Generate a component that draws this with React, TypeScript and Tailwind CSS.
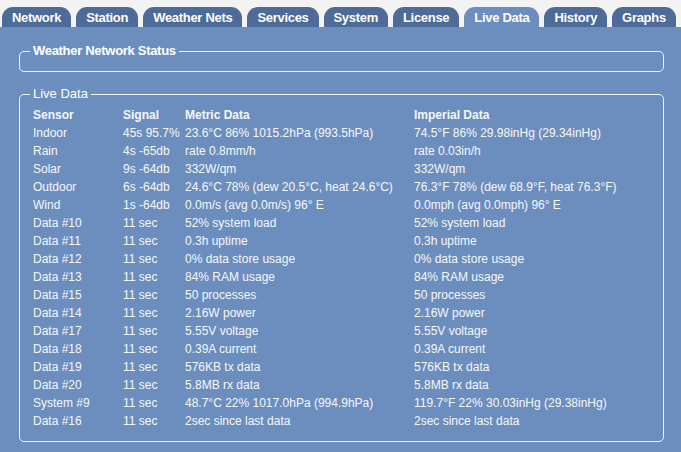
import React from 'react'

const tabs = ['Network', 'Station', 'Weather Nets', 'Services', 'System', 'License', 'Live Data', 'History', 'Graphs']

const rows: [string, string, string, string][] = [
  ['Indoor', '45s 95.7%', '23.6°C 86% 1015.2hPa (993.5hPa)', '74.5°F 86% 29.98inHg (29.34inHg)'],
  ['Rain', '4s -65db', 'rate 0.8mm/h', 'rate 0.03in/h'],
  ['Solar', '9s -64db', '332W/qm', '332W/qm'],
  ['Outdoor', '6s -64db', '24.6°C 78% (dew 20.5°C, heat 24.6°C)', '76.3°F 78% (dew 68.9°F, heat 76.3°F)'],
  ['Wind', '1s -64db', '0.0m/s (avg 0.0m/s) 96° E', '0.0mph (avg 0.0mph) 96° E'],
  ['Data #10', '11 sec', '52% system load', '52% system load'],
  ['Data #11', '11 sec', '0.3h uptime', '0.3h uptime'],
  ['Data #12', '11 sec', '0% data store usage', '0% data store usage'],
  ['Data #13', '11 sec', '84% RAM usage', '84% RAM usage'],
  ['Data #15', '11 sec', '50 processes', '50 processes'],
  ['Data #14', '11 sec', '2.16W power', '2.16W power'],
  ['Data #17', '11 sec', '5.55V voltage', '5.55V voltage'],
  ['Data #18', '11 sec', '0.39A current', '0.39A current'],
  ['Data #19', '11 sec', '576KB tx data', '576KB tx data'],
  ['Data #20', '11 sec', '5.8MB rx data', '5.8MB rx data'],
  ['System #9', '11 sec', '48.7°C 22% 1017.0hPa (994.9hPa)', '119.7°F 22% 30.03inHg (29.38inHg)'],
  ['Data #16', '11 sec', '2sec since last data', '2sec since last data'],
]

export default function App() {
  return (
    <div className="w-[681px] h-[452px] bg-[#f3f3f3] flex flex-col overflow-hidden font-['Liberation_Sans',Arial,sans-serif] text-white">
      {/* Tabs */}
      <div className="flex items-end gap-[5px] pl-[2px] pt-[7px] h-[27px]">
        {tabs.map((t) => (
          <div
            key={t}
            className={`shrink-0 whitespace-nowrap h-[20px] px-[10px] rounded-t-[11px] flex items-center text-[13px] font-bold tracking-[-0.3px] leading-none ${
              t === 'Live Data' ? 'bg-[#6c8ebe]' : 'bg-[#4d6b98]'
            }`}
          >
            {t}
          </div>
        ))}
      </div>

      {/* Panel */}
      <div className="flex-1 bg-[#6c8ebe] pl-[19px] pr-[17px] pt-[16px]">
        <fieldset className="border border-[#eef2fa] rounded-[5px] px-[10px] pt-[1px] pb-[11px]">
          <legend className="px-[3px] text-[13px] font-bold tracking-[-0.3px] leading-[16px]">Weather Network Status</legend>
        </fieldset>

        <fieldset className="mt-[14px] border border-[#eef2fa] rounded-[5px] px-[10px] pt-[4px] pb-[11px]">
          <legend className="px-[3px] text-[13px] leading-[16px]">Live Data</legend>
          <div className="grid grid-cols-[90px_62px_229px_1fr] pl-[3px] text-[12px] leading-[18px] text-[#f6f7fa]">
            <div className="font-bold">Sensor</div>
            <div className="font-bold">Signal</div>
            <div className="font-bold">Metric Data</div>
            <div className="font-bold">Imperial Data</div>
            {rows.map((r) => (
              <React.Fragment key={r[0]}>
                <div>{r[0]}</div>
                <div className="whitespace-nowrap">{r[1]}</div>
                <div className="whitespace-nowrap">{r[2]}</div>
                <div className="whitespace-nowrap">{r[3]}</div>
              </React.Fragment>
            ))}
          </div>
        </fieldset>
      </div>
    </div>
  )
}
